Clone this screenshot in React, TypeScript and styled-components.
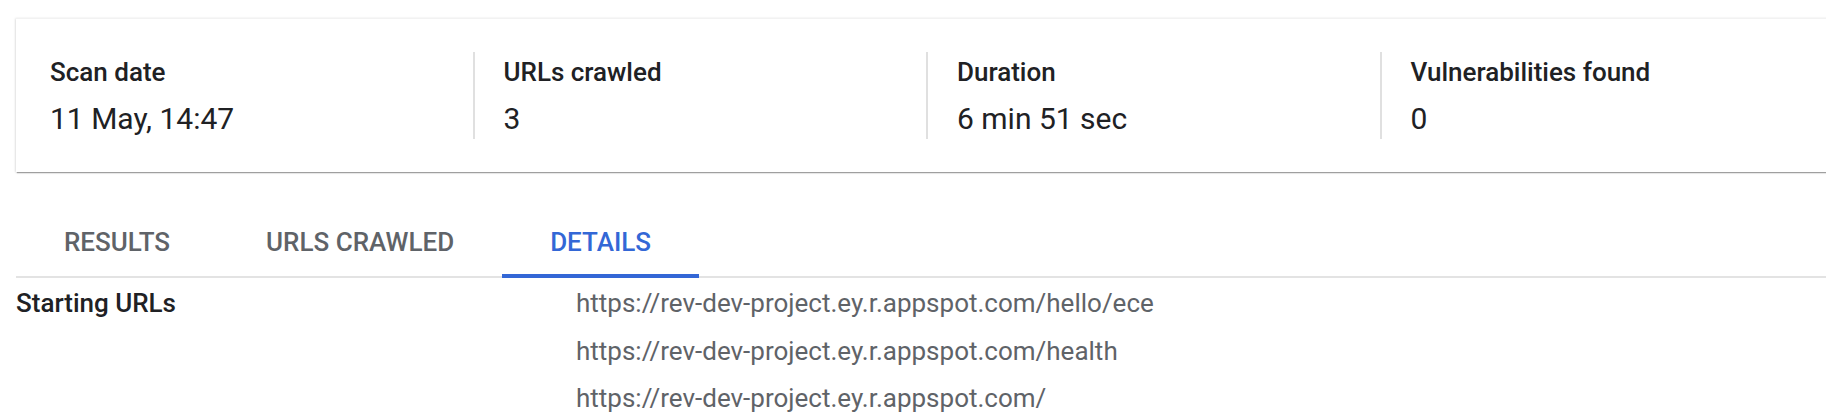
import styled, { createGlobalStyle } from 'styled-components';

const GlobalStyle = createGlobalStyle`
    html, body {
        margin: 0;
        padding: 0;
        background: #ffffff;
        overflow: hidden;
    }
    body {
        font-family: Roboto, "Liberation Sans", Arial, sans-serif;
        color: #202124;
    }
`

export interface StatItem {
    label: string,
    value: string
}

const stats: StatItem[] = [
    { label: 'Scan date', value: '11 May, 14:47' },
    { label: 'URLs crawled', value: '3' },
    { label: 'Duration', value: '6 min 51 sec' },
    { label: 'Vulnerabilities found', value: '0' },
]

const tabs = ['RESULTS', 'URLS CRAWLED', 'DETAILS']

const startingUrls = [
    'https://rev-dev-project.ey.r.appspot.com/hello/ece',
    'https://rev-dev-project.ey.r.appspot.com/health',
    'https://rev-dev-project.ey.r.appspot.com/',
]

const Page = styled('div')`
    width: 1826px;
    height: 420px;
    overflow: hidden;
    padding-left: 16px;
    padding-top: 18px;
    box-sizing: border-box;
`

const SummaryCard = styled('div')`
    display: flex;
    width: 1840px;
    height: 154px;
    box-sizing: border-box;
    padding: 33px 0 33px 3px;
    background: #fff;
    border-top: 1px solid #f2f2f2;
    box-shadow: 0 2px 1px -1px rgba(0, 0, 0, 0.3), 0 1px 2px rgba(0, 0, 0, 0.12), -1px 0 2px rgba(0, 0, 0, 0.08);
`

const Stat = styled('div')<{ $first?: boolean }>`
    flex: 0 0 453.5px;
    box-sizing: border-box;
    padding-left: 29px;
    border-left: 2px solid ${p => (p.$first ? 'transparent' : '#e0e0e0')};
    display: flex;
    flex-direction: column;
`

const StatLabel = styled('div')`
    font-size: 26px;
    font-weight: 500;
    line-height: 40px;
    color: #202124;
`

const StatValue = styled('div')`
    font-size: 30px;
    font-weight: 400;
    line-height: 42px;
    padding-top: 6px;
    color: #202124;
`

const TabBar = styled('div')`
    display: flex;
    margin-top: 32px;
    border-bottom: 2px solid #e3e3e3;
`

const Tab = styled('div')<{ $active?: boolean }>`
    padding: 20px 48px 14px;
    font-size: 26px;
    font-weight: 500;
    line-height: 36px;
    color: ${p => (p.$active ? '#3367d6' : '#5f6368')};
    border-bottom: 4px solid ${p => (p.$active ? '#3367d6' : 'transparent')};
    margin-bottom: -2px;
`

const DetailGrid = styled('div')`
    display: grid;
    grid-template-columns: 560px 1fr;
    padding-top: 2px;
`

const DetailLabel = styled('div')`
    font-size: 26px;
    font-weight: 500;
    line-height: 47.5px;
    color: #202124;
`

const UrlList = styled('div')`
    display: flex;
    flex-direction: column;
`

const Url = styled('div')`
    font-size: 26px;
    line-height: 47.5px;
    color: #5f6368;
`

const App = () => {
    return (
        <>
            <GlobalStyle />
            <Page>
                <SummaryCard>
                    {stats.map((item, key) => (
                        <Stat key={key} $first={key === 0}>
                            <StatLabel>{item.label}</StatLabel>
                            <StatValue>{item.value}</StatValue>
                        </Stat>
                    ))}
                </SummaryCard>
                <TabBar>
                    {tabs.map((tab, key) => (
                        <Tab key={key} $active={tab === 'DETAILS'}>{tab}</Tab>
                    ))}
                </TabBar>
                <DetailGrid>
                    <DetailLabel>Starting URLs</DetailLabel>
                    <UrlList>
                        {startingUrls.map((url, key) => (
                            <Url key={key}>{url}</Url>
                        ))}
                    </UrlList>
                </DetailGrid>
            </Page>
        </>
    )
}

export default App
